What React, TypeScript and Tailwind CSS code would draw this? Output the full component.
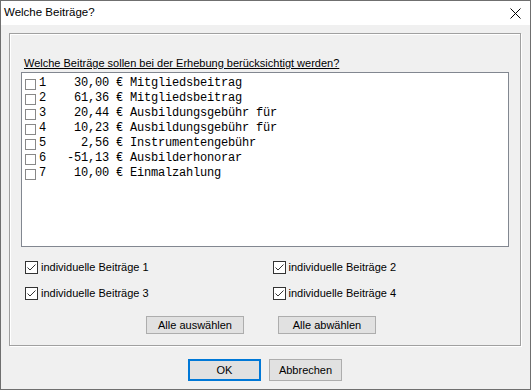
import React from 'react';

const items = [
  { n: 1, amount: '30,00', text: 'Mitgliedsbeitrag' },
  { n: 2, amount: '61,36', text: 'Mitgliedsbeitrag' },
  { n: 3, amount: '20,44', text: 'Ausbildungsgebühr für' },
  { n: 4, amount: '10,23', text: 'Ausbildungsgebühr für' },
  { n: 5, amount: '2,56', text: 'Instrumentengebühr' },
  { n: 6, amount: '-51,13', text: 'Ausbilderhonorar' },
  { n: 7, amount: '10,00', text: 'Einmalzahlung' },
];

const CheckBox = ({ checked }: { checked: boolean }) => (
  <span className="w-[13px] h-[13px] border border-[#333333] bg-white flex items-center justify-center shrink-0">
    {checked && (
      <svg width="11" height="11" viewBox="0 0 11 11">
        <polyline points="1.5,5.5 4,8 9.5,2.5" fill="none" stroke="#333333" strokeWidth="1" />
      </svg>
    )}
  </span>
);

const Check = ({ label }: { label: string }) => (
  <div className="flex items-center gap-[3px] w-[252px] h-[13px] leading-[13px]">
    <CheckBox checked />
    <span>{label}</span>
  </div>
);

const Button = ({ label, primary }: { label: string; primary?: boolean }) => (
  <button
    className={
      primary
        ? 'w-[73px] h-[22px] bg-[#e1e1e1] border-2 border-[#0078d7] text-black'
        : 'w-[73px] h-[22px] bg-[#e1e1e1] border border-[#adadad] text-black'
    }
  >
    {label}
  </button>
);

export default function App() {
  return (
    <div
      className="w-[531px] h-[390px] border border-[#6f6f6f] bg-[#f0f0f0] flex flex-col text-[11px] text-black"
      style={{ fontFamily: '"Liberation Sans", Arial, sans-serif' }}
    >
      {/* Title bar */}
      <div className="h-[24px] bg-white flex items-center justify-between pl-[3px] pr-[9px]">
        <span className="text-[11.5px]">Welche Beiträge?</span>
        <svg width="11" height="11" viewBox="0 0 11 11">
          <path d="M0.5 0.5 L10.5 10.5 M10.5 0.5 L0.5 10.5" stroke="#000" strokeWidth="1" />
        </svg>
      </div>

      {/* Group box */}
      <div className="ml-[8px] mt-[8px] w-[512px] h-[313px] border border-[#a0a0a0] shadow-[inset_1px_1px_0_#ffffff,1px_1px_0_#ffffff] flex flex-col">
        <div className="ml-[14px] mt-[22px] leading-[14px] underline">
          Welche Beiträge sollen bei der Erhebung berücksichtigt werden?
        </div>
        <div className="ml-[11px] mt-[2px] w-[488px] h-[175px] border border-[#828790] bg-white pt-[3px] pl-[3px]">
          {items.map((it) => (
            <div key={it.n} className="flex items-start h-[15px]">
              <span className="mt-[3px] w-[11px] h-[11px] border border-[#888888] bg-white shrink-0" />
              <span
                className="ml-[3px] whitespace-pre text-[12px] leading-[15px] tracking-[-0.2px]"
                style={{ fontFamily: '"Liberation Mono", "Courier New", monospace' }}
              >
                {`${it.n}${it.amount.padStart(9)} € ${it.text}`}
              </span>
            </div>
          ))}
        </div>

        <div className="ml-[15px] mt-[14px] flex flex-col gap-[13px]">
          <div className="flex">
            <Check label="individuelle Beiträge 1" />
            <Check label="individuelle Beiträge 2" />
          </div>
          <div className="flex">
            <Check label="individuelle Beiträge 3" />
            <Check label="individuelle Beiträge 4" />
          </div>
        </div>

        <div className="ml-[136px] mt-[16px] flex gap-[34px]">
          <button className="w-[98px] h-[18px] bg-[#e1e1e1] border border-[#adadad]">Alle auswählen</button>
          <button className="w-[98px] h-[18px] bg-[#e1e1e1] border border-[#adadad]">Alle abwählen</button>
        </div>
      </div>

      {/* Dialog buttons */}
      <div className="ml-[187px] mt-[13px] flex gap-[8px]">
        <Button label="OK" primary />
        <Button label="Abbrechen" />
      </div>
    </div>
  );
}
